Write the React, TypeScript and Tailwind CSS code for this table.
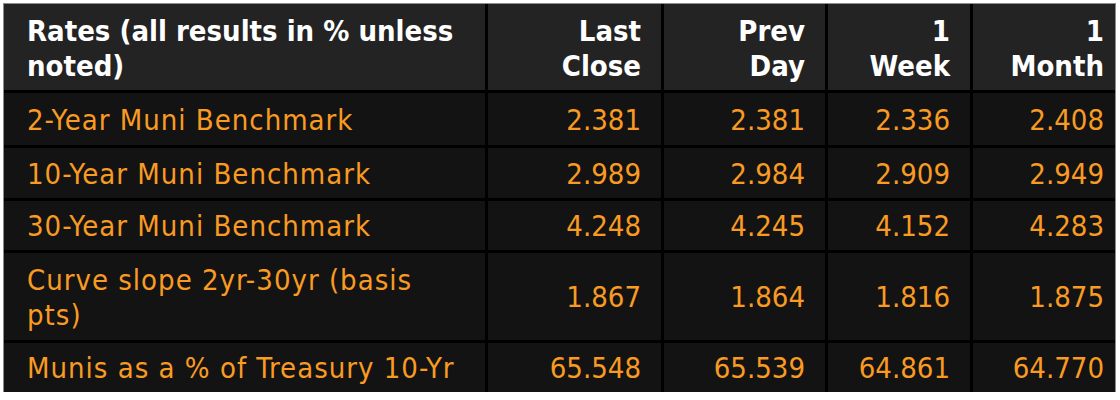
import React from "react";

type Row = { label: React.ReactNode; values: string[] };

const rows: Row[] = [
  { label: "2-Year Muni Benchmark", values: ["2.381", "2.381", "2.336", "2.408"] },
  { label: "10-Year Muni Benchmark", values: ["2.989", "2.984", "2.909", "2.949"] },
  { label: "30-Year Muni Benchmark", values: ["4.248", "4.245", "4.152", "4.283"] },
  {
    label: (
      <>
        Curve slope 2yr-30yr (basis
        <br />
        pts)
      </>
    ),
    values: ["1.867", "1.864", "1.816", "1.875"],
  },
  { label: "Munis as a % of Treasury 10-Yr", values: ["65.548", "65.539", "64.861", "64.770"] },
];

const headers = [
  ["Last", "Close"],
  ["Prev", "Day"],
  ["1", "Week"],
  ["1", "Month"],
];

export default function App() {
  return (
    <div className="w-[1120px] h-[400px] bg-white pt-[3px] pl-[3px] font-['DejaVu_Sans_Condensed','DejaVu_Sans',sans-serif]">
      <div className="w-[1113px] border-t border-x border-[#8c8c8c]">
        <div className="grid grid-cols-[481px_173px_161px_142px_142px] grid-rows-[86px_52px_50px_49px_87px_49px] gap-[3px] bg-black text-[29px] leading-[35px]">
          {/* header */}
          <div className="bg-[#232323] text-white font-bold pl-[23px] pt-[4px] flex items-center">
            <span>
              Rates (all results in % unless
              <br />
              noted)
            </span>
          </div>
          {headers.map(([a, b], i) => (
            <div
              key={i}
              className={`bg-[#232323] text-white font-bold pt-[4px] flex items-center justify-end text-right ${
                i === 3 ? "pr-[11px]" : "pr-[20px]"
              }`}
            >
              <span>
                {a}
                <br />
                {b}
              </span>
            </div>
          ))}

          {rows.map((r, ri) => (
            <React.Fragment key={ri}>
              <div className="bg-[#131313] text-[#f99b22] pl-[23px] pt-[2px] tracking-[1px] flex items-center">
                <span>{r.label}</span>
              </div>
              {r.values.map((v, vi) => (
                <div
                  key={vi}
                  className={`bg-[#131313] text-[#f99b22] pt-[2px] flex items-center justify-end ${
                    vi === 3 ? "pr-[11px]" : "pr-[20px]"
                  }`}
                >
                  {v}
                </div>
              ))}
            </React.Fragment>
          ))}
        </div>
      </div>
    </div>
  );
}
